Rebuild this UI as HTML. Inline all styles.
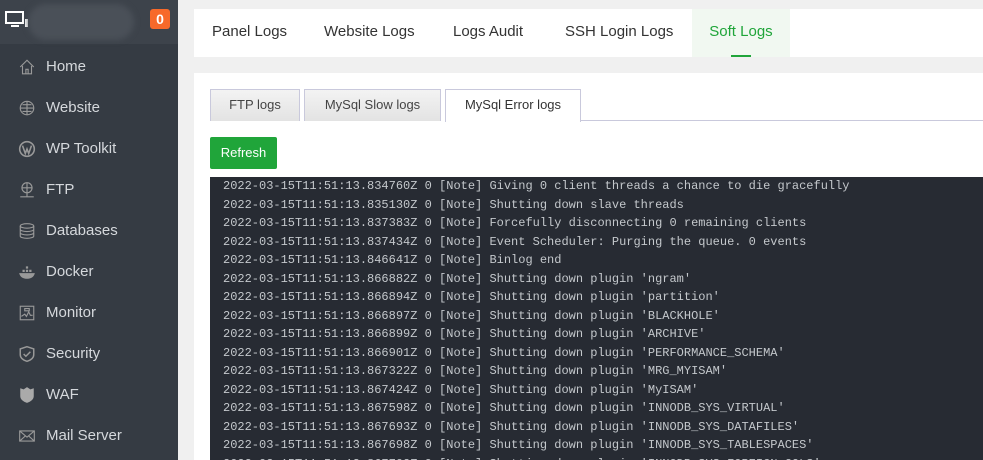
<!DOCTYPE html>
<html style="overflow:hidden"><head><meta charset="utf-8"><style>
*{margin:0;padding:0;box-sizing:border-box}
html,body{width:983px;height:460px;overflow:hidden}
body{background:#f0f0f0;font-family:"Liberation Sans",sans-serif;position:relative}
.side{position:absolute;left:0;top:0;width:178px;height:460px;background:#353b43}
.hdr{position:absolute;left:0;top:0;width:178px;height:44px;background:#3d434b}
.blur{position:absolute;left:28px;top:4px;width:106px;height:36px;border-radius:18px;background:#4a5058;filter:blur(3px)}
.badge{position:absolute;left:150px;top:9px;width:20px;height:20px;background:#f7692a;border-radius:3px;color:#fff;font-weight:bold;font-size:14px;text-align:center;line-height:20px}
.item{position:absolute;left:0;width:178px;height:41px;color:#d5d8dc;font-size:15px}
.item span{position:absolute;left:46px;top:1px;line-height:20px}
.item svg{position:absolute;left:18px;top:2px}
.top{position:absolute;left:194px;top:9px;width:789px;height:48px;background:#fff}
.top div{position:absolute;top:0;height:48px;line-height:46px;font-size:15px;color:#333}
.card{position:absolute;left:194px;top:73px;width:789px;height:387px;background:#fff;overflow:hidden}
.st{position:absolute;top:16px;height:32px;border:1px solid #c9c9dc;border-bottom:none;background:linear-gradient(#f3f3f3,#e3e3e3);font-size:13px;color:#444;text-align:center;line-height:30px}
.log{position:absolute;left:16px;top:104px;width:773px;height:283px;overflow:hidden;background:#272b33;color:#c4c8cc;font-family:"Liberation Mono",monospace;font-size:12px;padding:0 0 0 13px;line-height:18.5px;white-space:pre}
</style></head><body>
<div class="side">
<div class="hdr"><svg style="position:absolute;left:5px;top:11px" width="24" height="18" viewBox="0 0 24 18"><rect x="1" y="1" width="17" height="11" fill="none" stroke="#fff" stroke-width="2"/><rect x="6" y="14" width="8" height="2" fill="#fff"/><rect x="20" y="8" width="3" height="8" fill="#fff"/></svg><div class="blur"></div><div class="badge">0</div></div>
<div class="item" style="top:56px"><svg width="18" height="18" viewBox="0 0 16 16" fill="none" stroke="#999"><path d="M2 8L8 2l6 6M4 7v7h8V7M7 14v-4h2v4"/></svg><span>Home</span></div>
<div class="item" style="top:97px"><svg width="18" height="18" viewBox="0 0 16 16" fill="none" stroke="#999"><circle cx="8" cy="8" r="6"/><path d="M2 8h12M8 2v12M4 5h8M4 11h8"/></svg><span>Website</span></div>
<div class="item" style="top:138px"><svg width="18" height="18" viewBox="0 0 16 16" fill="none" stroke="#999" stroke-width="1.4"><circle cx="8" cy="8" r="6.5"/><path d="M4 5l2.5 7 1.5-4 1.5 4 2.5-7"/></svg><span>WP Toolkit</span></div>
<div class="item" style="top:179px"><svg width="18" height="18" viewBox="0 0 16 16" fill="none" stroke="#999"><circle cx="8" cy="6" r="4.5"/><path d="M3.5 6h9M8 1.5v9M2 14h12M8 10.5v3.5"/></svg><span>FTP</span></div>
<div class="item" style="top:220px"><svg width="18" height="18" viewBox="0 0 16 16" fill="none" stroke="#999"><ellipse cx="8" cy="3.5" rx="6" ry="2"/><path d="M2 3.5v9c0 1.1 2.7 2 6 2s6-.9 6-2v-9M2 6.5c0 1.1 2.7 2 6 2s6-.9 6-2M2 9.5c0 1.1 2.7 2 6 2s6-.9 6-2"/></svg><span>Databases</span></div>
<div class="item" style="top:261px"><svg width="18" height="18" viewBox="0 0 16 16" fill="#999"><path d="M1 9h14c-1 4-4 5-7 5S2 13 1 9zM4 6h2v2H4zM7 6h2v2H7zM7 3h2v2H7zM10 6h2v2h-2z"/></svg><span>Docker</span></div>
<div class="item" style="top:302px"><svg width="18" height="18" viewBox="0 0 16 16" fill="none" stroke="#999"><rect x="2" y="2" width="12" height="12"/><path d="M3 11l3-2 1.5 2 2-4 1.5 3h2M6 4h4v2H6z"/></svg><span>Monitor</span></div>
<div class="item" style="top:343px"><svg width="18" height="18" viewBox="0 0 16 16" fill="none" stroke="#999" stroke-width="1.3"><path d="M8 1.5l6 2v5c0 3-3 5-6 6-3-1-6-3-6-6v-5z"/><path d="M5 8l2 2 4-4"/></svg><span>Security</span></div>
<div class="item" style="top:384px"><svg width="18" height="18" viewBox="0 0 16 16" fill="#aaa"><path d="M2 2l3 1 3-2 3 2 3-1v7c0 3-3 5-6 6-3-1-6-3-6-6z"/></svg><span>WAF</span></div>
<div class="item" style="top:425px"><svg width="18" height="18" viewBox="0 0 16 16" fill="none" stroke="#999"><rect x="1.5" y="3.5" width="13" height="9"/><path d="M1.5 3.5L8 9l6.5-5.5M1.5 12.5l5-4.5M14.5 12.5l-5-4.5"/></svg><span>Mail Server</span></div>
</div>
<div class="top">
<div style="left:18px">Panel Logs</div>
<div style="left:130px">Website Logs</div>
<div style="left:259px">Logs Audit</div>
<div style="left:371px">SSH Login Logs</div>
<div style="left:498px;width:98px;background:#f1f8f1;color:#20a53a;text-align:center">Soft Logs<i style="position:absolute;left:39px;top:46px;width:20px;height:2px;background:#20a53a"></i></div>
</div>
<div class="card">
<div class="st" style="left:16px;width:90px">FTP logs</div>
<div class="st" style="left:110px;width:137px">MySql Slow logs</div>
<div class="st" style="left:251px;width:136px;height:33px;background:#fff;color:#333">MySql Error logs</div>
<div style="position:absolute;left:387px;top:47px;width:402px;height:1px;background:#c9c9dc"></div>
<div style="position:absolute;left:16px;top:64px;width:67px;height:32px;background:#20a53a;border-radius:2px;color:#fff;font-size:13px;text-align:center;line-height:32px">Refresh</div>
<div class="log">2022-03-15T11:51:13.834760Z 0 [Note] Giving 0 client threads a chance to die gracefully
2022-03-15T11:51:13.835130Z 0 [Note] Shutting down slave threads
2022-03-15T11:51:13.837383Z 0 [Note] Forcefully disconnecting 0 remaining clients
2022-03-15T11:51:13.837434Z 0 [Note] Event Scheduler: Purging the queue. 0 events
2022-03-15T11:51:13.846641Z 0 [Note] Binlog end
2022-03-15T11:51:13.866882Z 0 [Note] Shutting down plugin 'ngram'
2022-03-15T11:51:13.866894Z 0 [Note] Shutting down plugin 'partition'
2022-03-15T11:51:13.866897Z 0 [Note] Shutting down plugin 'BLACKHOLE'
2022-03-15T11:51:13.866899Z 0 [Note] Shutting down plugin 'ARCHIVE'
2022-03-15T11:51:13.866901Z 0 [Note] Shutting down plugin 'PERFORMANCE_SCHEMA'
2022-03-15T11:51:13.867322Z 0 [Note] Shutting down plugin 'MRG_MYISAM'
2022-03-15T11:51:13.867424Z 0 [Note] Shutting down plugin 'MyISAM'
2022-03-15T11:51:13.867598Z 0 [Note] Shutting down plugin 'INNODB_SYS_VIRTUAL'
2022-03-15T11:51:13.867693Z 0 [Note] Shutting down plugin 'INNODB_SYS_DATAFILES'
2022-03-15T11:51:13.867698Z 0 [Note] Shutting down plugin 'INNODB_SYS_TABLESPACES'
2022-03-15T11:51:13.867702Z 0 [Note] Shutting down plugin 'INNODB_SYS_FOREIGN_COLS'</div>
</div>
</body></html>
